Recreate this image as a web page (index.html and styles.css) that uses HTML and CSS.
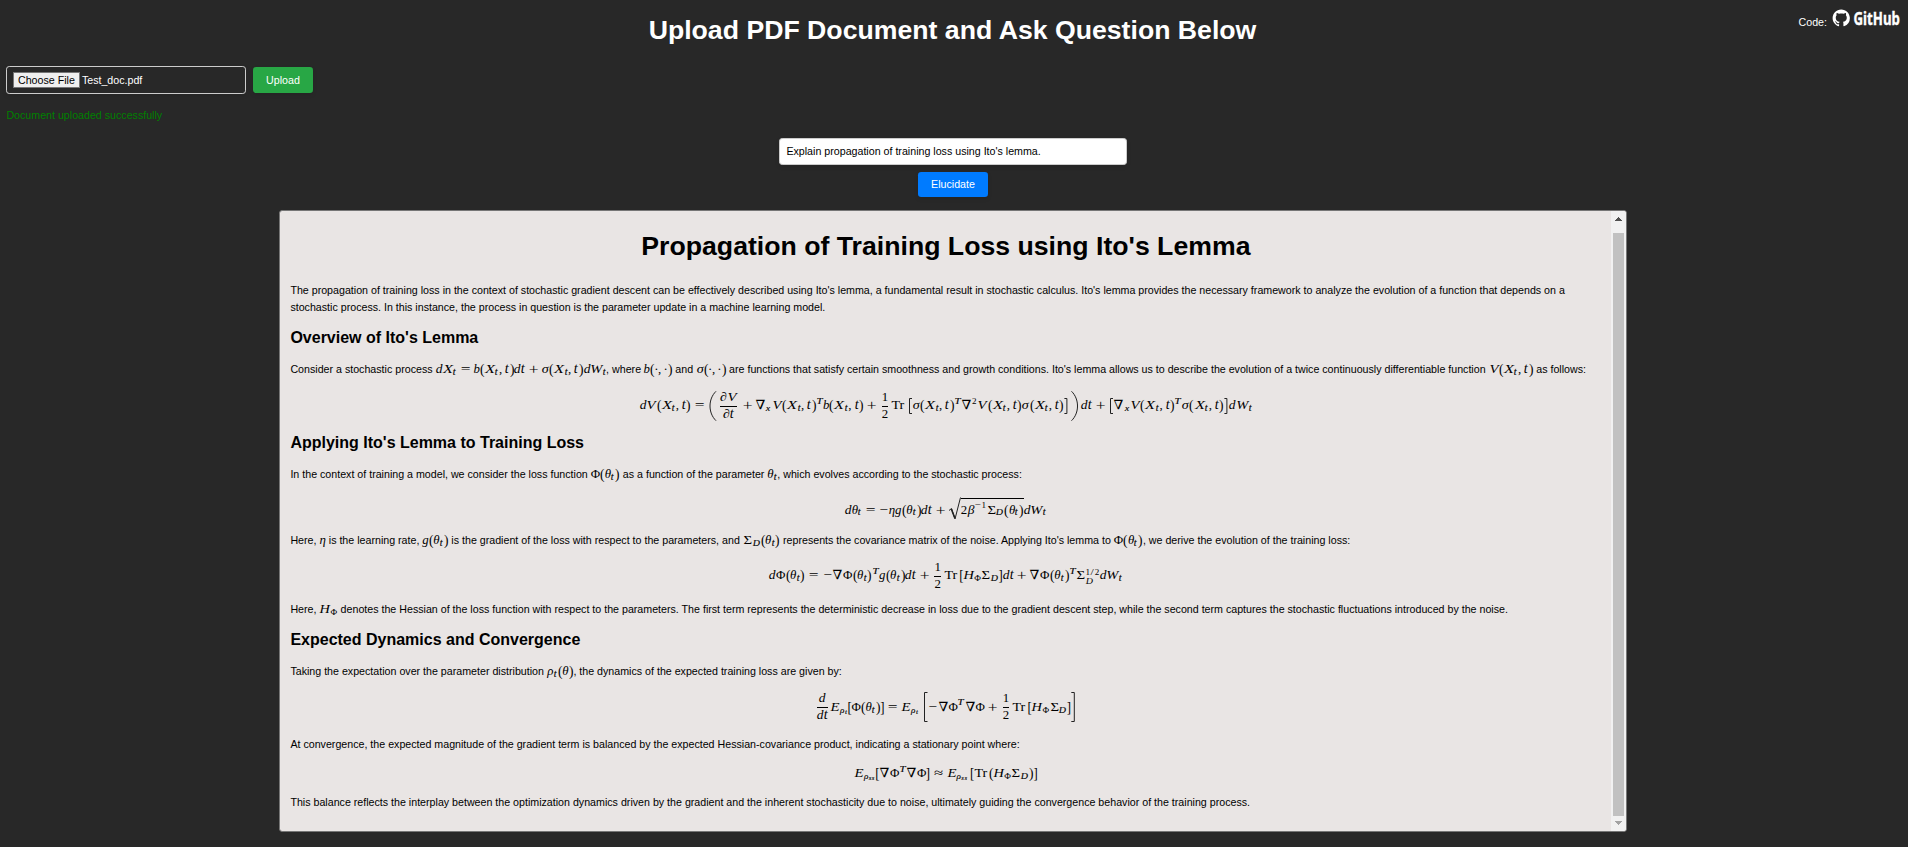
FILE: index.html
```html
<!DOCTYPE html>
<html lang="en">
<head>
<meta charset="utf-8">
<title>Upload PDF Document and Ask Question Below</title>
<link rel="stylesheet" href="styles.css">
</head>
<body>
<header class="top">
  <h1 class="title">Upload PDF Document and Ask Question Below</h1>
  <div class="code">
    <span class="code-label">Code:</span>
    <svg class="gh" viewBox="0 -6 72 32" width="72" height="32" role="img" aria-label="GitHub">
      <path transform="translate(.6 1.4) scale(1.08)" fill="#fff" d="M8 0C3.58 0 0 3.58 0 8c0 3.54 2.29 6.53 5.47 7.59.4.07.55-.17.55-.38 0-.19-.01-.82-.01-1.49-2.01.37-2.53-.49-2.69-.94-.09-.23-.48-.94-.82-1.13-.28-.15-.68-.52-.01-.53.63-.01 1.08.58 1.23.82.72 1.21 1.87.87 2.33.66.07-.52.28-.87.51-1.07-1.78-.2-3.64-.89-3.64-3.95 0-.87.31-1.59.82-2.15-.08-.2-.36-1.02.08-2.12 0 0 .67-.21 2.2.82.64-.18 1.32-.27 2-.27s1.36.09 2 .27c1.53-1.04 2.2-.82 2.2-.82.44 1.1.16 1.92.08 2.12.51.56.82 1.27.82 2.15 0 3.07-1.87 3.75-3.65 3.95.29.25.54.73.54 1.48 0 1.07-.01 1.93-.01 2.2 0 .21.15.46.55.38A8.01 8.01 0 0 0 16 8c0-4.42-3.58-8-8-8z"/>
      <text class="gh-word" x="21.5" y="17" textLength="46.5" lengthAdjust="spacingAndGlyphs">GitHub</text>
    </svg>
  </div>
</header>

<section class="upload">
  <div class="file"><span class="choose">Choose File</span><span class="fname">Test_doc.pdf</span></div>
  <button class="btn green">Upload</button>
</section>
<p class="status">Document uploaded successfully</p>

<section class="ask">
  <div class="question">Explain propagation of training loss using Ito's lemma.</div>
  <button class="btn blue">Elucidate</button>
</section>

<main class="panel">
  <article class="doc">
    <h1 class="doc-title">Propagation of Training Loss using Ito's Lemma</h1>
    <p class="p intro">The propagation of training loss in the context of stochastic gradient descent can be effectively described using Ito's lemma, a fundamental result in stochastic calculus. Ito's lemma provides the necessary framework to analyze the evolution of a function that depends on a stochastic process. In this instance, the process in question is the parameter update in a machine learning model.</p>
    <h2 class="h2">Overview of Ito's Lemma</h2>
    <p class="p">Consider a stochastic process <span class="m">dX_t=b(X_t,t)dt+σ(X_t,t)dW_t</span>, where <span class="m">b(·,·)</span> and <span class="m">σ(·,·)</span> are functions that satisfy certain smoothness and growth conditions. Ito's lemma allows us to describe the evolution of a twice continuously differentiable function <span class="m">V(X_t,t)</span> as follows:</p>
    <div class="eq eq-ito"><span class="m">dV(X_t,t)=\L(\frac{∂V}{∂t}+∇_xV(X_t,t)^Tb(X_t,t)+\frac{1}{2}\Tr\;\B[σ(X_t,t)^T∇^2V(X_t,t)σ(X_t,t)\B]\L)\;dt+\B[∇_xV(X_t,t)^Tσ(X_t,t)\B]dW_t</span></div>
    <h2 class="h2">Applying Ito's Lemma to Training Loss</h2>
    <p class="p">In the context of training a model, we consider the loss function <span class="m">Φ(θ_t)</span> as a function of the parameter <span class="m">θ_t</span>, which evolves according to the stochastic process:</p>
    <div class="eq eq-sgd"><span class="m">dθ_t=-ηg(θ_t)dt+\sqrt{2β^{-1}Σ_D(θ_t)}dW_t</span></div>
    <p class="p">Here, <span class="m">η</span> is the learning rate, <span class="m">g(θ_t)</span> is the gradient of the loss with respect to the parameters, and <span class="m">Σ_D(θ_t)</span> represents the covariance matrix of the noise. Applying Ito's lemma to <span class="m">Φ(θ_t)</span>, we derive the evolution of the training loss:</p>
    <div class="eq eq-loss"><span class="m">dΦ(θ_t)=-∇Φ(θ_t)^Tg(θ_t)dt+\frac{1}{2}\Tr\;[H_ΦΣ_D]dt+∇Φ(θ_t)^TΣ_D^{1/2}dW_t</span></div>
    <p class="p">Here, <span class="m">H_Φ</span> denotes the Hessian of the loss function with respect to the parameters. The first term represents the deterministic decrease in loss due to the gradient descent step, while the second term captures the stochastic fluctuations introduced by the noise.</p>
    <h2 class="h2">Expected Dynamics and Convergence</h2>
    <p class="p">Taking the expectation over the parameter distribution <span class="m">ρ_t(θ)</span>, the dynamics of the expected training loss are given by:</p>
    <div class="eq eq-mean"><span class="m">\frac{d}{dt}E_{ρ_t}[Φ(θ_t)]=E_{ρ_t}\;\L[-∇Φ^T∇Φ+\frac{1}{2}\Tr\;[H_ΦΣ_D]\L]</span></div>
    <p class="p">At convergence, the expected magnitude of the gradient term is balanced by the expected Hessian-covariance product, indicating a stationary point where:</p>
    <div class="eq eq-conv"><span class="m">E_{ρ_{ss}}[∇Φ^T∇Φ]≈E_{ρ_{ss}}\;[\Tr(H_ΦΣ_D)]</span></div>
    <p class="p">This balance reflects the interplay between the optimization dynamics driven by the gradient and the inherent stochasticity due to noise, ultimately guiding the convergence behavior of the training process.</p>
  </article>
  <div class="scroll">
    <svg class="up" viewBox="0 0 7 4" width="7" height="4" shape-rendering="crispEdges"><path fill="#505050" d="M3 0h1v1h1v1h1v1h1v1H0V3h1V2h1V1h1z"/></svg>
    <div class="thumb"></div>
    <svg class="down" viewBox="0 0 7 4" width="7" height="4" shape-rendering="crispEdges"><path fill="#a3a3a3" d="M0 0h7v1H6v1H5v1H4v1H3V3H2V2H1V1H0z"/></svg>
  </div>
</main>
<script src="math.js"></script>
</body>
</html>
```
FILE: styles.css
```css
* { box-sizing: border-box; }
html { background: #282828; }
body {
  margin: 0;
  height: 847px;
  overflow: hidden;
  display: flex;
  flex-direction: column;
  background: #282828;
  color: #fff;
  font-family: "Liberation Sans", Arial, sans-serif;
  font-size: 10.667px;
}
h1, h2, p { margin: 0; }

.top { position: relative; height: 66px; padding-top: 15px; }
.title { text-align: center; font-size: 26.667px; line-height: 30px; padding-right: 3px; }
.code { position: absolute; right: 4px; top: 2px; display: flex; align-items: flex-start; gap: 5px; }
.code-label { font-size: 10.667px; line-height: 12px; margin-top: 14px; }
.gh { display: block; overflow: visible; }
.gh-word { font: 700 17px "Noto Sans", sans-serif; fill: #fff; stroke: #fff; stroke-width: .35; }

.upload { display: flex; align-items: center; gap: 7px; height: 28px; padding-left: 6px; }
.file {
  width: 240px; height: 28px; padding: 0 6px;
  display: flex; align-items: center; gap: 2px;
  border: 1px solid #ccc; border-radius: 3.2px;
  box-shadow: 0 2px 4px rgba(0, 0, 0, .1);
}
.choose {
  height: 16px; line-height: 14px; padding: 0 4px;
  background: #efefef; border: 1px solid #767676; color: #000;
}
.btn {
  border: 0; padding: 0; border-radius: 3.2px; color: #fff;
  font: 10.667px "Liberation Sans", Arial, sans-serif;
  box-shadow: 0 2px 4px rgba(0, 0, 0, .1);
}
.green { width: 60px; height: 26px; background: #28a745; }
.blue { width: 70px; height: 25px; padding-bottom: 1px; background: #007bff; }
.status { color: green; line-height: 12px; margin-top: 15px; padding-left: 6.4px; }

.ask { display: flex; flex-direction: column; align-items: center; gap: 7px; margin-top: 17px; padding-right: 2px; }
.question {
  width: 348px; height: 27px; line-height: 25px; padding: 0 6.4px;
  background: #fff; color: #000; border: 1px solid #ccc; border-radius: 3.2px;
  box-shadow: 0 2px 4px rgba(0, 0, 0, .1);
}

.panel {
  width: 1348px; height: 622px; margin: 13px 0 0 279px;
  display: flex; background: #e9e5e4; color: #000;
  border: 1px solid #767676; border-radius: 3.2px; overflow: hidden;
  flex: none;
}
.doc { flex: 1; padding: 20px 9.6px 0 10.4px; }
.doc-title { text-align: center; font-size: 26.667px; line-height: 30px; margin-bottom: 21px; }
.p { line-height: 17px; }
.h2 { font-size: 16px; line-height: 18px; margin: 12.5px 0 14.5px; }
.h2 + .p { height: 17px; }

.eq { display: flex; justify-content: center; align-items: flex-start; }
.eq-ito { height: 43px; padding-top: 12.5px; }
.eq-sgd { height: 49px; padding-top: 13.5px; }
.eq-loss { height: 52px; padding-top: 11.5px; }
.eq-mean { height: 56px; padding-top: 12px; }
.eq-conv { height: 41px; padding-top: 15.5px; }

.m {
  display: inline-block; white-space: nowrap;
  font: 12.85px/0 "Liberation Serif", "DejaVu Serif", serif;
}
.g { display: inline-block; text-align: center; white-space: nowrap; }
.g span { display: inline-block; margin: 0 -1em; }
.it { font-style: italic; }
.nabla { font-family: "DejaVu Serif", serif; }
.sub, .sup { display: inline-block; font-size: .707em; margin-right: .07em; }
.sub { vertical-align: -.22em; }
.sup { vertical-align: .58em; }
.sub .it, .sup .it { -webkit-text-stroke: .15px #000; }
.m .sub .sub { vertical-align: -.2em; font-size: .72em; }
.both { display: inline-flex; flex-direction: column; align-items: flex-start; vertical-align: .45em; font-size: .707em; line-height: 1em; margin-right: .07em; }
.both > span { height: 1em; }
.frac {
  display: inline-flex; flex-direction: column; align-items: center;
  vertical-align: .677em; line-height: 1em; margin: 0 .18em; height: 1em;
}
.num { flex: none; height: 1em; }
.den { flex: none; height: 1em; margin-top: .07em; }
.bar { flex: none; width: 100%; height: 1px; margin-top: .2em; background: #000; }
.big { display: inline-block; overflow: visible; fill: none; stroke: #222; stroke-width: 1; }
.size3 { height: 30px; vertical-align: -11.5px; }
.size1 { height: 16px; vertical-align: -4.5px; }
.surd { height: 23px; vertical-align: -6px; }
.root { display: inline-block; height: 23px; border-top: 1px solid #000; line-height: 23.4px; }
.root .g, .root .sub, .root .sup { line-height: 0; }

.scroll {
  width: 15px; background: #f1f1f1;
  display: flex; flex-direction: column; align-items: center;
}
.up { margin-top: 6px; flex: none; }
.thumb { width: 11px; height: 583px; margin-top: 12px; background: #c1c1c1; flex: none; }
.down { margin-top: 5px; flex: none; }
```
FILE: math.js
```js
// Small math typesetter: [advance in em, horizontal stretch, vertical stretch].
const METRICS = {
  d: [.523, 1.05, 1.05], t: [.361, 1.1, 1.08], b: [.429, 1, 1.05], g: [.48], s: [.469], x: [.572, 1.1],
  X: [.828, 1.28], V: [.769, 1.15], W: [.944, 1.13], T: [.704, 1.2], H: [.86, 1.12], E: [.738, 1.15], D: [.828, 1.1],
  'σ': [.572, 1.1], 'θ': [.469], 'η': [.497], 'ρ': [.517], 'β': [.566, 1.05],
  'Φ': [.722], 'Σ': [.722, 1.15], '∇': [.833, 1.1], '∂': [.56, 1.1],
  '(': [.389, 1.05, 1.14], ')': [.389, 1.05, 1.14], '[': [.278, 1, 1.14], ']': [.278, 1, 1.14], '1': [.5], '2': [.5], '/': [.5, 1.3],
  ',': [.445], '·': [.278], '-': [.778, 1.2], '=': [1.334, 1.35], '+': [1.222, 1.35, 1.15], '≈': [1.334, 1.3]
};
const UPRIGHT = 'ΦΣ∇()[]12/,·-=+≈';

function el(cls, html) { return '<span class="' + cls + '">' + html + '</span>'; }

function glyph(c) {
  const m = METRICS[c] || [.5];
  const cls = 'g' + (UPRIGHT.includes(c) ? '' : ' it') + (c === '∇' ? ' nabla' : '');
  const w = m[0];
  if (c === ',') return '<span class="g" style="width:' + w + 'em;text-align:left">,</span>';
  const stretch = m[1] ? 'transform:scale(' + m[1] + ',' + (m[2] || 1) + ')' : '';
  return '<span class="' + cls + '" style="width:' + w + 'em"><span style="' + stretch + '">' + (c === '-' ? '−' : c) + '</span></span>';
}

function delim(kind, c) {
  const shapes = {
    'L(': [9.5, 30, 'M8 .3C0 8 0 22 8 29.7', 3], 'L)': [9.5, 30, 'M1.5 .3C9.5 8 9.5 22 1.5 29.7', 3],
    'L[': [6.8, 30, 'M6.5 .5H3.5V29.5H6.5', 3], 'L]': [6.8, 30, 'M.3 .5H3.3V29.5H.3', 3],
    'B[': [5.4, 16, 'M5 .5H2.5V15.5H5', 1], 'B]': [5.4, 16, 'M.4 .5H2.9V15.5H.4', 1]
  };
  const s = shapes[kind + c];
  return '<svg class="big size' + s[3] + '" width="' + s[0] + '" height="' + s[1] + '"><path d="' + s[2] + '"/></svg>';
}

function render(src) {
  let i = 0;
  function group() {
    if (src[i] === '{') {
      let depth = 1, start = ++i;
      while (depth) { if (src[i] === '{') depth++; if (src[i] === '}') depth--; i++; }
      return render(src.slice(start, i - 1));
    }
    return glyph(src[i++]);
  }
  let out = '';
  while (i < src.length) {
    const c = src[i];
    if (c === '\\') {
      const rest = src.slice(i + 1);
      if (rest.startsWith('frac')) {
        i += 5;
        const n = group(), d = group();
        out += el('frac', el('num', n) + el('bar', '') + el('den', d));
      } else if (rest.startsWith('sqrt')) {
        i += 5;
        out += '<svg class="big surd" width="12.5" height="23"><path d="M1 13.5L3.5 11.5L7 22L12.5 .5"/><path stroke-width="1.6" d="M3.3 12L6.8 21"/></svg>' + el('root', group());
      } else if (rest.startsWith('Tr')) {
        i += 3;
        out += '<span class="g" style="width:1.114em"><span style="transform:scaleX(1.1)">Tr</span></span>';
      } else if (rest[0] === ';') {
        i += 2;
        out += '<span class="g" style="width:.167em"></span>';
      } else {
        out += delim(rest[0], rest[1]);
        i += 3;
      }
    } else if (c === '_' || c === '^') {
      i++;
      const first = group();
      if (c === '_' && src[i] === '^') {
        i++;
        out += el('both', '<span>' + group() + '</span><span>' + first + '</span>');
      } else out += el(c === '_' ? 'sub' : 'sup', first);
    } else {
      out += glyph(c);
      i++;
    }
  }
  return out;
}

document.querySelectorAll('.m').forEach(function (m) { m.innerHTML = render(m.textContent); });
```
